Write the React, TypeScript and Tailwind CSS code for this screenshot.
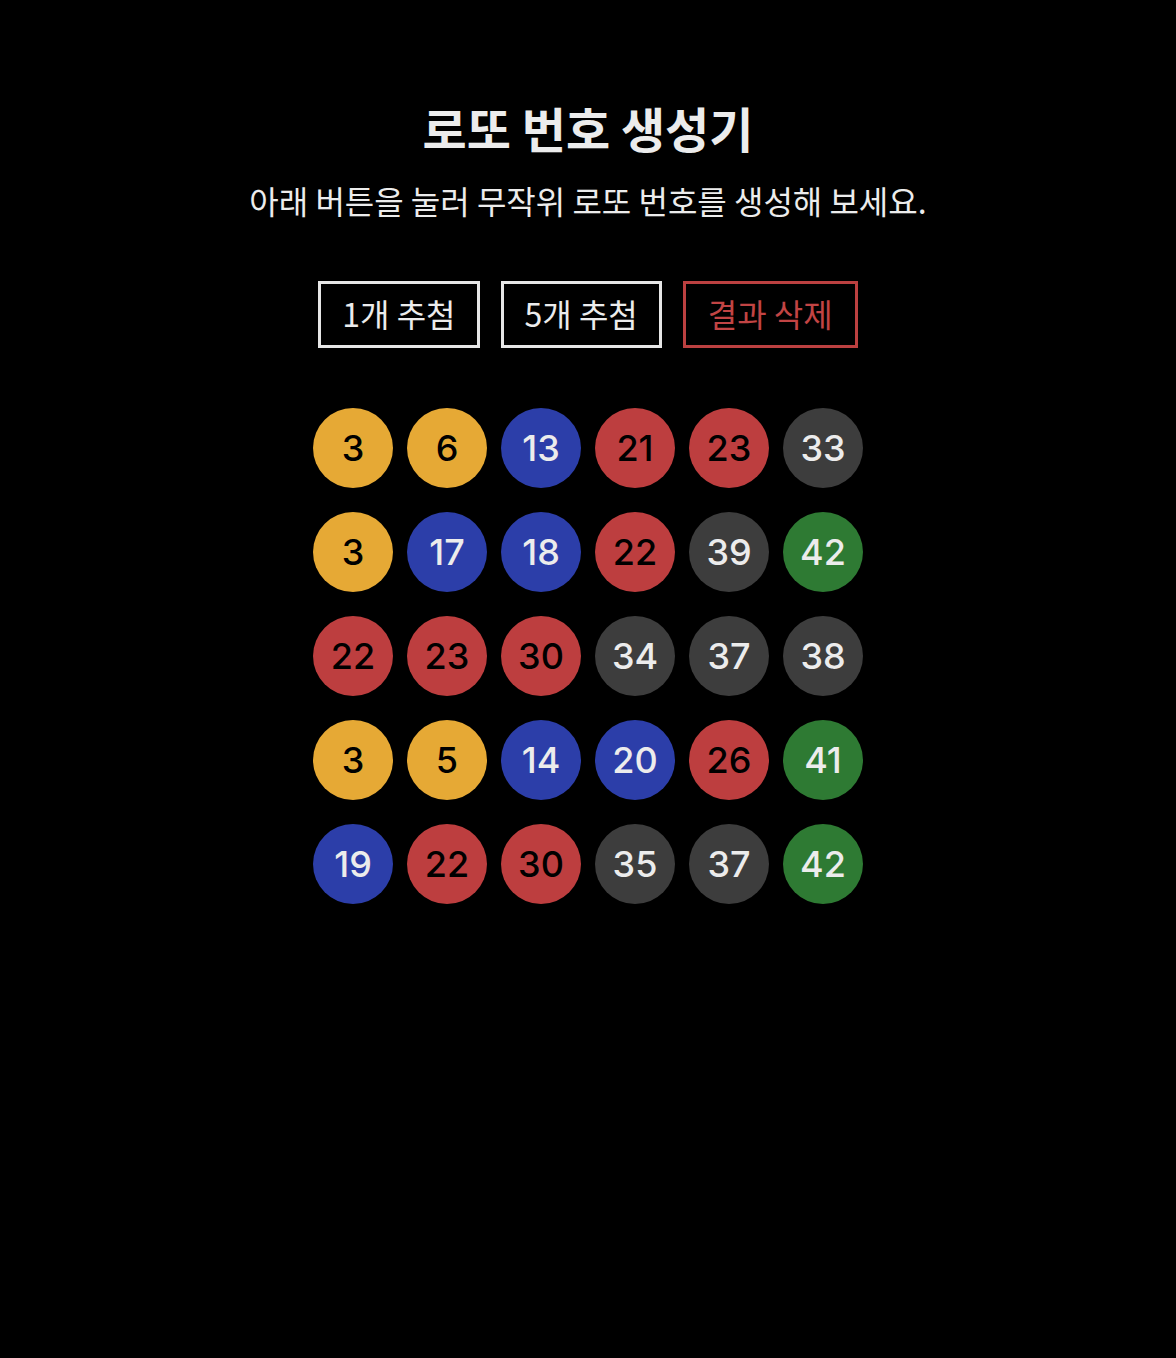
const ROWS: number[][] = [
  [3, 6, 13, 21, 23, 33],
  [3, 17, 18, 22, 39, 42],
  [22, 23, 30, 34, 37, 38],
  [3, 5, 14, 20, 26, 41],
  [19, 22, 30, 35, 37, 42],
];

function ballTone(n: number) {
  if (n <= 10) return "bg-[#e6a935] text-black";
  if (n <= 20) return "bg-[#2c3ea9] text-[#ececec]";
  if (n <= 30) return "bg-[#bd3e3f] text-black";
  if (n <= 40) return "bg-[#3d3d3d] text-[#ececec]";
  return "bg-[#2e7a33] text-[#ececec]";
}

export default function App() {
  return (
    <div className="min-h-[1358px] bg-black pt-[95px] text-[#ececec] font-['Noto_Sans_CJK_KR','Noto_Sans',sans-serif]">
      <div className="flex flex-col items-center">
        <h1 className="text-[48px] font-bold leading-[64px]">로또 번호 생성기</h1>
        <p className="mt-[21px] text-[32px] leading-[40px]">아래 버튼을 눌러 무작위 로또 번호를 생성해 보세요.</p>

        <div className="mt-[61px] flex gap-[21px]">
          <button type="button" className="h-[67px] border-[3px] border-[#e6e6e6] px-[21px] pb-[3px] text-[32px] text-[#ececec]">
            1개 추첨
          </button>
          <button type="button" className="h-[67px] border-[3px] border-[#e6e6e6] px-[21px] pb-[3px] text-[32px] text-[#ececec]">
            5개 추첨
          </button>
          <button type="button" className="h-[67px] border-[3px] border-[#bb4040] px-[22px] pb-[3px] text-[32px] text-[#c24444]">
            결과 삭제
          </button>
        </div>

        <div className="mt-[60px] flex flex-col gap-[24px]">
          {ROWS.map((row, i) => (
            <div key={i} className="flex gap-[14px]">
              {row.map((n, j) => (
                <span
                  key={j}
                  className={`flex h-[80px] w-[80px] items-center justify-center rounded-full text-[36px] font-medium font-['Inter',sans-serif] ${ballTone(n)}`}
                >
                  {n}
                </span>
              ))}
            </div>
          ))}
        </div>
      </div>
    </div>
  );
}
